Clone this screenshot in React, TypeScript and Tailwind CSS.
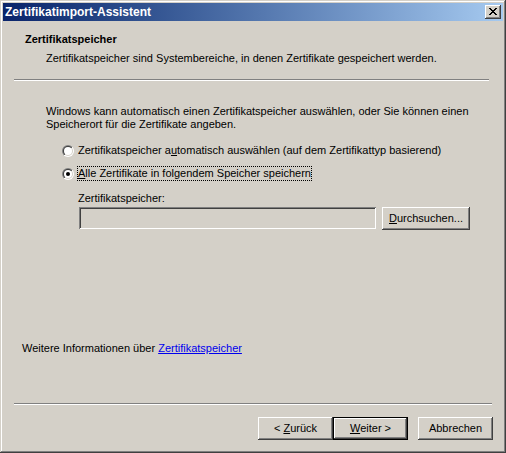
import React from 'react';

const raised =
  'shadow-[inset_-1px_-1px_#404040,inset_1px_1px_#ffffff,inset_-2px_-2px_#808080,inset_2px_2px_#d4d0c8]';
const sunken =
  'shadow-[inset_1px_1px_#808080,inset_-1px_-1px_#ffffff,inset_2px_2px_#404040,inset_-2px_-2px_#d4d0c8]';

// classic 8x7 close glyph
const closeGlyph = ['XX....XX', '.XX..XX.', '..XXXX..', '...XX...', '..XXXX..', '.XX..XX.', 'XX....XX'];

const CloseButton = () => (
  <div className={`w-[16px] h-[14px] bg-[#d4d0c8] flex items-center justify-center ${raised}`}>
    <svg width="8" height="7" viewBox="0 0 8 7" shapeRendering="crispEdges" className="-mt-[1px]">
      {closeGlyph.map((row, y) =>
        row.split('').map((c, x) => (c === 'X' ? <rect key={`${x}-${y}`} x={x} y={y} width="1" height="1" fill="#000" /> : null))
      )}
    </svg>
  </div>
);

const Radio = ({ id, checked }: { id: string; checked?: boolean }) => (
  <svg width="12" height="12" viewBox="0 0 12 12" className="shrink-0">
    <defs>
      <linearGradient id={`${id}-o`} x1="0" y1="0" x2="1" y2="1">
        <stop offset="0.5" stopColor="#808080" />
        <stop offset="0.5" stopColor="#ffffff" />
      </linearGradient>
      <linearGradient id={`${id}-i`} x1="0" y1="0" x2="1" y2="1">
        <stop offset="0.5" stopColor="#404040" />
        <stop offset="0.5" stopColor="#d4d0c8" />
      </linearGradient>
    </defs>
    <circle cx="6" cy="6" r="6" fill={`url(#${id}-o)`} />
    <circle cx="6" cy="6" r="5" fill={`url(#${id}-i)`} />
    <circle cx="6" cy="6" r="4" fill="#ffffff" />
    {checked && <circle cx="6" cy="6" r="2" fill="#000" />}
  </svg>
);

const Separator = ({ className = '' }: { className?: string }) => (
  <div className={`h-[2px] border-t border-t-[#808080] border-b border-b-white ${className}`} />
);

const Button = ({ children, isDefault, className = '' }: { children: React.ReactNode; isDefault?: boolean; className?: string }) => (
  <div
    className={`h-[23px] bg-[#d4d0c8] flex items-center justify-center leading-[13px] ${raised} ${
      isDefault ? 'border border-black' : ''
    } ${className}`}
  >
    {children}
  </div>
);

export default function App() {
  return (
    <div
      className={`w-[506px] h-[453px] bg-[#d4d0c8] p-[3px] flex flex-col text-[11px] text-black font-['Liberation_Sans',Arial,sans-serif] shadow-[inset_-1px_-1px_#404040,inset_1px_1px_#d4d0c8,inset_-2px_-2px_#808080,inset_2px_2px_#ffffff]`}
    >
      {/* title bar */}
      <div className="h-[18px] flex items-center justify-between pl-[2px] pr-[2px] bg-gradient-to-r from-[#0a246a] to-[#a6caf0]">
        <span className="text-white font-bold text-[12px] leading-[14px]">Zertifikatimport-Assistent</span>
        <CloseButton />
      </div>

      <div className="flex-1 flex flex-col leading-[13px]">
        {/* header */}
        <div className="pt-[12px] pl-[22px]">
          <div className="font-bold">Zertifikatspeicher</div>
          <div className="mt-[6px] pl-[21px]">Zertifikatspeicher sind Systembereiche, in denen Zertifikate gespeichert werden.</div>
        </div>
        <Separator className="mt-[14px] ml-[11px] mr-[14px]" />

        {/* body */}
        <div className="pl-[43px] mt-[24px]">
          <div className="whitespace-nowrap">Windows kann automatisch einen Zertifikatspeicher auswählen, oder Sie können einen</div>
          <div className="whitespace-nowrap">Speicherort für die Zertifikate angeben.</div>
        </div>

        <div className="pl-[59px] mt-[12px] flex flex-col gap-[8px]">
          <div className="flex items-center gap-[3px]">
            <Radio id="r1" />
            <span className="border border-transparent whitespace-nowrap">
              Zertifikatspeicher a<u>u</u>tomatisch auswählen (auf dem Zertifikattyp basierend)
            </span>
          </div>
          <div className="flex items-center gap-[3px]">
            <Radio id="r2" checked />
            <span className="border border-dotted border-black whitespace-nowrap">
              <u>A</u>lle Zertifikate in folgendem Speicher speichern
            </span>
          </div>
        </div>

        <div className="pl-[75px] mt-[11px]">Zertifikatspeicher:</div>
        <div className="pl-[76px] mt-[2px] flex items-start gap-[6px]">
          <div className={`w-[297px] h-[22px] bg-[#d4d0c8] ${sunken}`} />
          <Button className="w-[88px]">
            <span>
              <u>D</u>urchsuchen...
            </span>
          </Button>
        </div>

        <div className="flex-1" />

        <div className="pl-[19px]">
          Weitere Informationen über{' '}
          <span className="text-[#0000ee] underline">Zertifikatspeicher</span>
        </div>

        <Separator className="mt-[48px] ml-[11px] mr-[11px]" />

        <div className="mt-[12px] mb-[10px] pr-[10px] flex justify-end">
          <Button className="w-[75px]">
            <span>
              &lt; <u>Z</u>urück
            </span>
          </Button>
          <Button className="w-[75px]" isDefault>
            <span>
              <u>W</u>eiter &gt;
            </span>
          </Button>
          <Button className="w-[75px] ml-[10px]">Abbrechen</Button>
        </div>
      </div>
    </div>
  );
}
